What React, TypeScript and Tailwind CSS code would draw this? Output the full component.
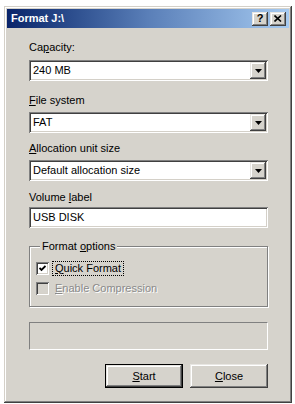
import React from 'react';

const sunken = 'shadow-[inset_1px_1px_#808080,inset_-1px_-1px_#ffffff,inset_2px_2px_#404040,inset_-2px_-2px_#d4d0c8]';
const raised = 'shadow-[inset_-1px_-1px_#404040,inset_1px_1px_#e8e6e2,inset_-2px_-2px_#808080,inset_2px_2px_#ffffff]';

const Arrow = () => (
  <svg width="7" height="4" viewBox="0 0 7 4">
    <path d="M0 0h7L3.5 4z" fill="#000" />
  </svg>
);

const Combo = ({ value }: { value: string }) => (
  <div className={`h-[21px] bg-white flex items-center pl-[4px] pr-[2px] ${sunken}`}>
    <span className="flex-1 leading-[13px]">{value}</span>
    <div className={`w-[16px] h-[17px] bg-[#d6d3cc] flex items-center justify-center ${raised}`}>
      <Arrow />
    </div>
  </div>
);

const Label = ({ children, mt }: { children: React.ReactNode; mt: string }) => (
  <div className={`leading-[13px] ${mt}`}>{children}</div>
);

const Button = ({ children, def }: { children: React.ReactNode; def?: boolean }) => (
  <div className={`w-[78px] h-[24px] flex items-center justify-center bg-[#d6d3cc] ${raised} ${def ? 'border border-black' : ''}`}>
    {children}
  </div>
);

export default function App() {
  return (
    <div className="w-[295px] h-[404px] bg-white pt-[6px] pl-[4px] text-[11px] text-black font-['Liberation_Sans',Arial,sans-serif]">
      <div className={`w-[288px] h-[397px] bg-[#d6d3cc] p-[3px] flex flex-col shadow-[inset_-1px_-1px_#404040,inset_1px_1px_#d4d0c8,inset_-2px_-2px_#808080,inset_2px_2px_#ffffff]`}>
        {/* title bar */}
        <div className="h-[19px] flex items-center pl-[4px] pr-[3px] bg-gradient-to-r from-[#0a246a] via-[#5a7fb8] to-[#a6caf0]">
          <span className="flex-1 text-white font-bold leading-[13px]">Format J:\</span>
          <div className={`w-[16px] h-[14px] bg-[#d6d3cc] flex items-center justify-center font-bold text-[11px] leading-none ${raised}`}>?</div>
          <div className={`ml-[2px] w-[16px] h-[14px] bg-[#d6d3cc] flex items-center justify-center ${raised}`}>
            <svg width="8" height="7" viewBox="0 0 8 7">
              <path d="M0.5 0.5L7 6.5M7 0.5L0.5 6.5" stroke="#000" strokeWidth="1.6" />
            </svg>
          </div>
        </div>

        {/* body */}
        <div className="flex flex-col pl-[22px] pr-[21px]">
          <Label mt="mt-[13px]">Ca<u>p</u>acity:</Label>
          <div className="mt-[6px]"><Combo value="240 MB" /></div>

          <Label mt="mt-[13px]"><u>F</u>ile system</Label>
          <div className="mt-[5px]"><Combo value="FAT" /></div>

          <Label mt="mt-[9px]"><u>A</u>llocation unit size</Label>
          <div className="mt-[5px]"><Combo value="Default allocation size" /></div>

          <Label mt="mt-[10px]">Volume <u>l</u>abel</Label>
          <div className={`mt-[3px] h-[21px] bg-white flex items-center pl-[4px] ${sunken}`}>
            <span className="leading-[13px]">USB DISK</span>
          </div>

          <fieldset className="mt-[12px] border border-[#808080] shadow-[inset_1px_1px_#ffffff,1px_1px_#ffffff] pl-[6px] pt-[5px] pb-[8px]">
            <legend className="ml-[4px] px-[2px] leading-[13px] bg-[#d6d3cc]">Format <u>o</u>ptions</legend>
            <div className="h-[20px] flex items-center">
              <div className={`w-[13px] h-[13px] bg-white flex items-center justify-center ${sunken}`}>
                <svg width="7" height="7" viewBox="0 0 7 7">
                  <path d="M0.5 3L2.5 5L6.5 1" stroke="#000" strokeWidth="1.8" fill="none" />
                </svg>
              </div>
              <span className="ml-[4px] px-[2px] leading-[13px] outline outline-1 outline-dotted outline-black">
                <u>Q</u>uick Format
              </span>
            </div>
            <div className="h-[20px] flex items-center">
              <div className={`w-[13px] h-[13px] bg-[#d6d3cc] ${sunken}`} />
              <span className="ml-[6px] leading-[13px] text-[#8a8a8a] [text-shadow:1px_1px_0_#fff]">
                <u>E</u>nable Compression
              </span>
            </div>
          </fieldset>

          <div className="mt-[15px] h-[28px] border border-t-[#808080] border-l-[#808080] border-b-white border-r-white" />

          <div className="mt-[14px] flex justify-end gap-[7px]">
            <Button def><u>S</u>tart</Button>
            <Button><u>C</u>lose</Button>
          </div>
        </div>
      </div>
    </div>
  );
}
